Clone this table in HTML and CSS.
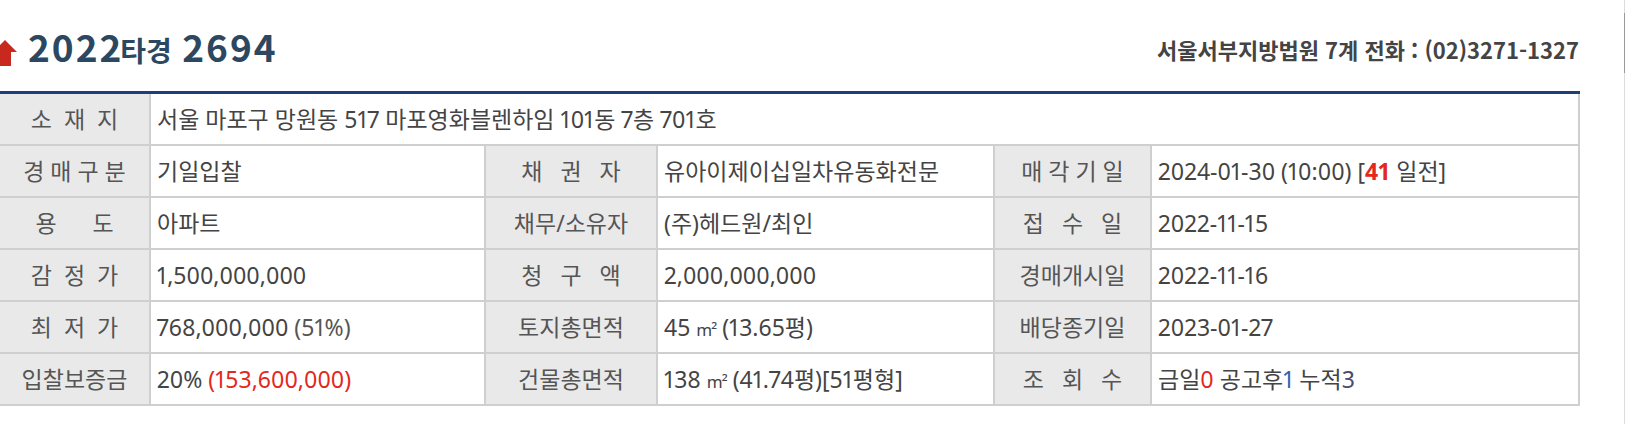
FILE: index.html
```html
<!DOCTYPE html>
<html lang="ko">
<head>
<meta charset="utf-8">
<link rel="stylesheet" href="styles.css">
</head>
<body>
<div class="page">
  <div class="top">
    <h1 class="title">
      <svg class="arrow" width="24" height="28" viewBox="0 0 24 28"><path d="M11 0 L23 12 L17 12 L17 26 L5 26 L5 12 L-1 12 Z" fill="#c8281e"/></svg>
      <span class="tt"><span class="yr">2022</span><span class="kind">타경</span> <span class="yr">2694</span></span>
    </h1>
    <div class="court">서울서부지방법원 7계 전화 : (02)3271-1327</div>
  </div>
  <div class="grid">
    <div class="lb">소&nbsp;&nbsp;재&nbsp;&nbsp;지</div>
    <div class="val span5">서울 마포구 망원동 517 마포영화블렌하임 101동 7층 701호</div>

    <div class="lb">경 매 구 분</div>
    <div class="val">기일입찰</div>
    <div class="lb">채&nbsp;&nbsp;&nbsp;권&nbsp;&nbsp;&nbsp;자</div>
    <div class="val">유아이제이십일차유동화전문</div>
    <div class="lb">매 각 기 일</div>
    <div class="val">2024-01-30 (10:00) [<b class="red">41</b> 일전]</div>

    <div class="lb">용&nbsp;&nbsp;&nbsp;&nbsp;&nbsp;&nbsp;도</div>
    <div class="val">아파트</div>
    <div class="lb">채무/소유자</div>
    <div class="val">(주)헤드원/최인</div>
    <div class="lb">접&nbsp;&nbsp;&nbsp;수&nbsp;&nbsp;&nbsp;일</div>
    <div class="val">2022-11-15</div>

    <div class="lb">감&nbsp;&nbsp;정&nbsp;&nbsp;가</div>
    <div class="val">1,500,000,000</div>
    <div class="lb">청&nbsp;&nbsp;&nbsp;구&nbsp;&nbsp;&nbsp;액</div>
    <div class="val">2,000,000,000</div>
    <div class="lb">경매개시일</div>
    <div class="val">2022-11-16</div>

    <div class="lb">최&nbsp;&nbsp;저&nbsp;&nbsp;가</div>
    <div class="val">768,000,000 <span class="muted">(51%)</span></div>
    <div class="lb">토지총면적</div>
    <div class="val">45 <span class="unit">m²</span> (13.65평)</div>
    <div class="lb">배당종기일</div>
    <div class="val">2023-01-27</div>

    <div class="lb">입찰보증금</div>
    <div class="val">20% <span class="red">(153,600,000)</span></div>
    <div class="lb">건물총면적</div>
    <div class="val">138 <span class="unit">m²</span> (41.74평)[51평형]</div>
    <div class="lb">조&nbsp;&nbsp;&nbsp;회&nbsp;&nbsp;&nbsp;수</div>
    <div class="val">금일<span class="red">0</span> 공고후<span class="blue">1</span> 누적<span class="purple">3</span></div>
  </div>
</div>
<div class="edge"><div class="thumb"></div></div>
</body>
</html>
```

FILE: styles.css
```css
html, body {
  margin: 0;
  padding: 0;
  background: #fff;
}
.page {
  width: 1580px;
  font-family: "Noto Sans", "Noto Sans CJK KR", sans-serif;
  color: #444;
}
.top {
  height: 91px;
  box-sizing: border-box;
  display: flex;
  align-items: flex-end;
  justify-content: space-between;
  padding: 0 1px 26px 0;
}
.title {
  margin: 0 0 -4px 0;
  display: flex;
  align-items: flex-end;
  font-family: "Noto Sans CJK KR", sans-serif;
  font-weight: 700;
  color: #2c4760;
  font-size: 37px;
  line-height: 37px;
}
.arrow {
  margin-left: -6px;
  margin-right: 10px;
  margin-bottom: 1px;
  flex: none;
}
.tt {
  white-space: pre;
}
.yr {
  letter-spacing: 2px;
}
.kind {
  font-size: 28px;
  margin-left: -3px;
}
.court {
  font-family: "Noto Sans CJK KR", sans-serif;
  font-weight: 700;
  font-size: 22px;
  line-height: 22px;
  color: #444;
  margin-bottom: 5px;
}
.grid {
  display: grid;
  grid-template-columns: 151px 335px 172px 337px 157px 428px;
  grid-auto-rows: 52px;
  border-top: 3px solid #1e3f7a;
}
.grid > div {
  box-sizing: border-box;
  border-right: 2px solid #cfcfcf;
  border-bottom: 2px solid #cfcfcf;
  font-size: 23px;
  line-height: 50px;
  white-space: nowrap;
  overflow: hidden;
  font-variant-numeric: proportional-nums;
}
.lb {
  background: #e9e9e9;
  text-align: center;
  color: #555;
}
.val {
  background: #fff;
  padding-left: 6px;
}
.span5 {
  grid-column: span 5;
}
.unit {
  font-size: 17px;
  letter-spacing: -1px;
}
.red {
  color: #e3281c;
}
b.red {
  font-weight: 700;
}
.blue {
  color: #2a64b0;
}
.purple {
  color: #4b4a6e;
}
.muted {
  color: #555;
}
.edge {
  position: fixed;
  top: 0;
  right: 1px;
  width: 1px;
  height: 100%;
  background: #dcdcdc;
}
.thumb {
  margin-top: 13px;
  height: 60px;
  background: #9a9a9a;
}
```
